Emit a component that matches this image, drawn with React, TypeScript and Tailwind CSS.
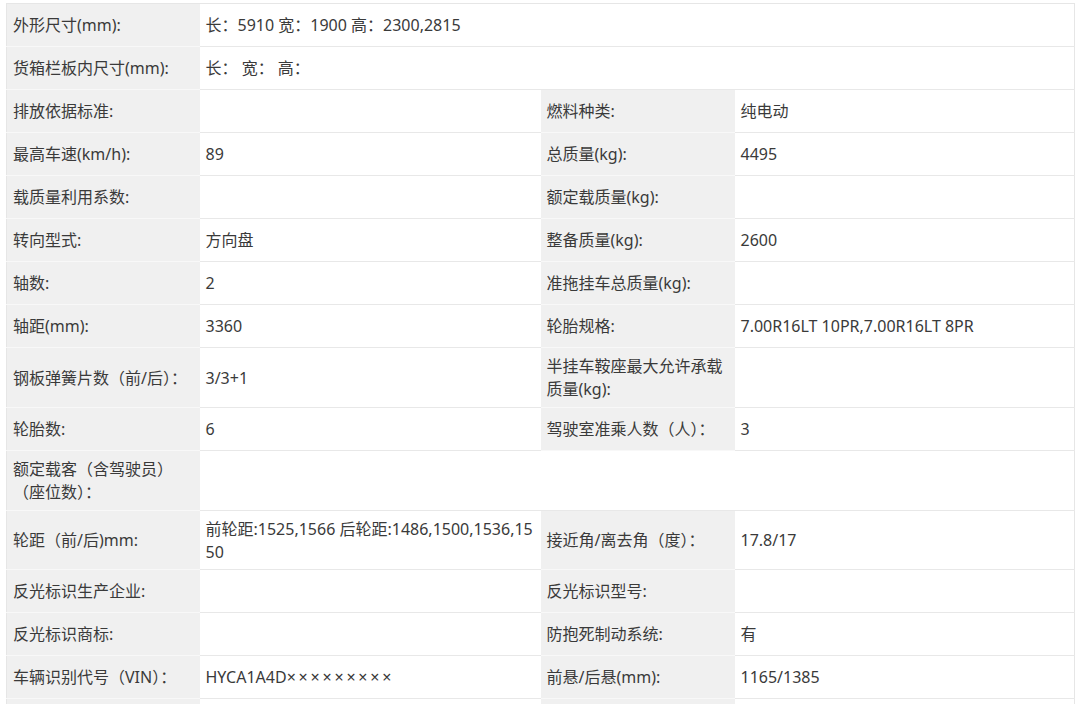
import React from "react";

type Cell = React.ReactNode;
type Row = { h: number; cells: Cell[]; span?: boolean };

const rows: Row[] = [
  { h: 43, span: true, cells: ["外形尺寸(mm):", "长：5910 宽：1900 高：2300,2815"] },
  { h: 43, span: true, cells: ["货箱栏板内尺寸(mm):", "长： 宽： 高："] },
  { h: 43, cells: ["排放依据标准:", "", "燃料种类:", "纯电动"] },
  { h: 43, cells: ["最高车速(km/h):", "89", "总质量(kg):", "4495"] },
  { h: 43, cells: ["载质量利用系数:", "", "额定载质量(kg):", ""] },
  { h: 43, cells: ["转向型式:", "方向盘", "整备质量(kg):", "2600"] },
  { h: 43, cells: ["轴数:", "2", "准拖挂车总质量(kg):", ""] },
  { h: 43, cells: ["轴距(mm):", "3360", "轮胎规格:", "7.00R16LT 10PR,7.00R16LT 8PR"] },
  {
    h: 60,
    cells: [
      "钢板弹簧片数（前/后）：",
      "3/3+1",
      <>
        半挂车鞍座最大允许承载
        <br />
        质量(kg):
      </>,
      "",
    ],
  },
  { h: 43, cells: ["轮胎数:", "6", "驾驶室准乘人数（人）：", "3"] },
  {
    h: 60,
    span: true,
    cells: [
      <>
        额定载客（含驾驶员）
        <br />
        （座位数）：
      </>,
      "",
    ],
  },
  {
    h: 59,
    cells: [
      "轮距（前/后)mm:",
      <span className="whitespace-nowrap">
        前轮距:1525,1566 后轮距:1486,1500,1536,15
        <br />
        50
      </span>,
      "接近角/离去角（度）：",
      "17.8/17",
    ],
  },
  { h: 43, cells: ["反光标识生产企业:", "", "反光标识型号:", ""] },
  { h: 43, cells: ["反光标识商标:", "", "防抱死制动系统:", "有"] },
  {
    h: 43,
    cells: [
      "车辆识别代号（VIN）：",
      <>
        HYCA1A4D<span className="tracking-[2.8px]">×××××××××</span>
      </>,
      "前悬/后悬(mm):",
      "1165/1385",
    ],
  },
  { h: 43, cells: ["", "", "", ""] },
];

const label = "bg-[#f0f0f0] border-b border-[#f8f8f8] px-[6px] pt-[1px] align-middle whitespace-nowrap overflow-hidden";
const value = "bg-white border-b border-[#e8e8e8] px-[6px] pt-[1px] align-middle";

export default function App() {
  return (
    <div
      className="w-[1080px] h-[704px] overflow-hidden bg-white pt-[3px] pl-[6px] pr-[6px]"
      style={{ fontFamily: '"Noto Sans", "Noto Sans CJK SC", sans-serif' }}
    >
      <table className="w-[1068px] table-fixed border-collapse border border-[#e6e6e6] text-[16px] leading-[23px] text-[#3a3a3a]">
        <colgroup>
          <col className="w-[193px]" />
          <col className="w-[341px]" />
          <col className="w-[194px]" />
          <col className="w-[340px]" />
        </colgroup>
        <tbody>
          {rows.map((r, i) => (
            <tr key={i} style={{ height: r.h }}>
              {r.span ? (
                <>
                  <td className={label}>{r.cells[0]}</td>
                  <td colSpan={3} className={value}>
                    {r.cells[1]}
                  </td>
                </>
              ) : (
                <>
                  <td className={label}>{r.cells[0]}</td>
                  <td className={value}>{r.cells[1]}</td>
                  <td className={label}>{r.cells[2]}</td>
                  <td className={value}>{r.cells[3]}</td>
                </>
              )}
            </tr>
          ))}
        </tbody>
      </table>
    </div>
  );
}
